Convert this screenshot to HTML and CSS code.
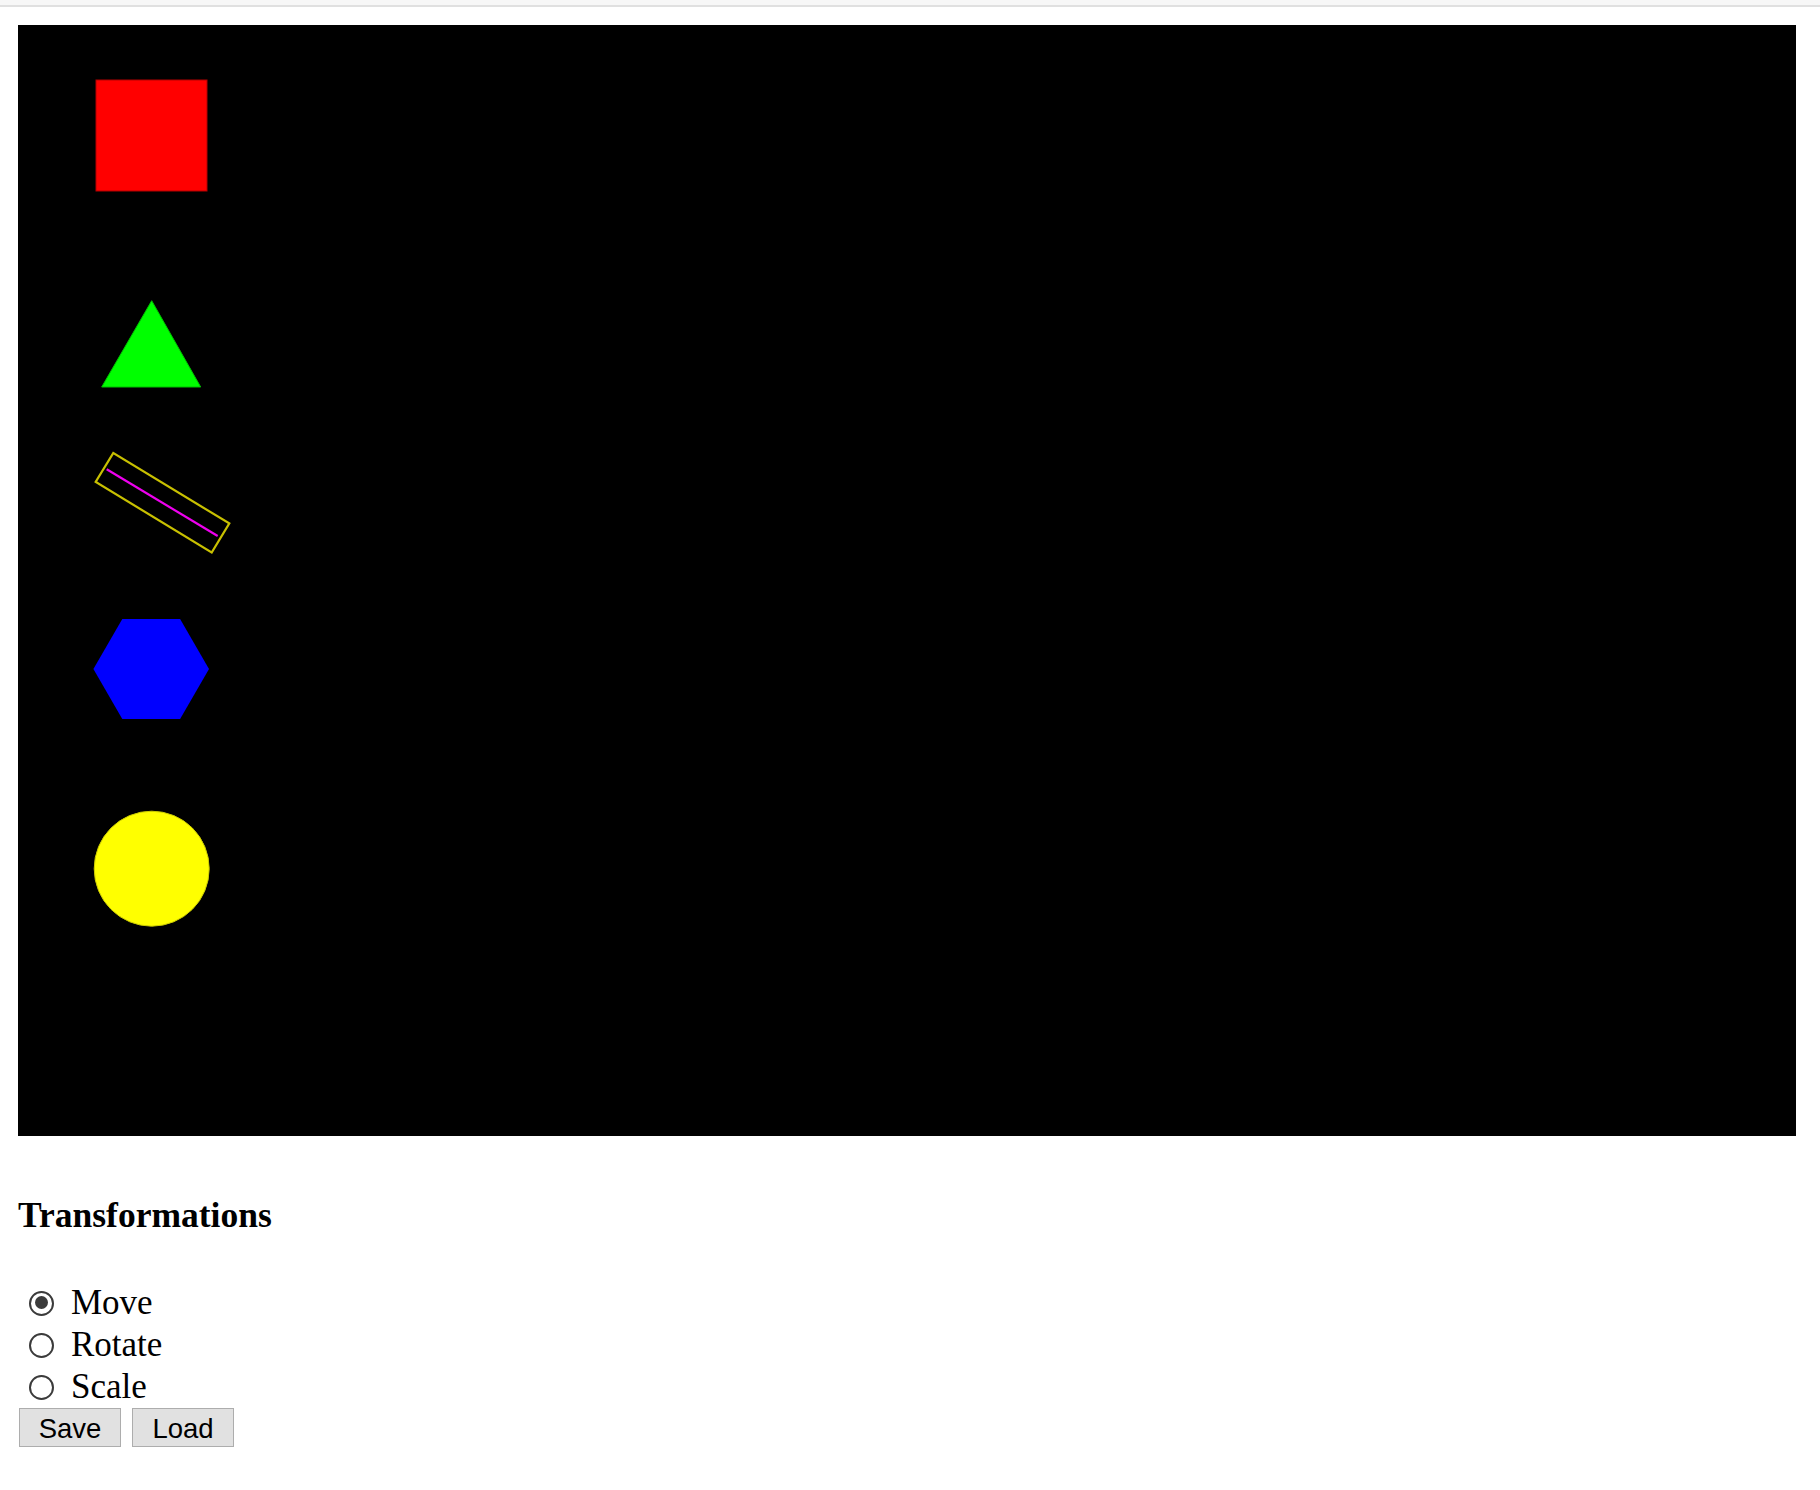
FILE: index.html
```html
<!DOCTYPE html>
<html>
<head>
<meta charset="utf-8">
<title>Transformations</title>
<link rel="stylesheet" href="styles.css">
</head>
<body>
<div class="topbar"></div>
<main class="page">
  <svg class="stage" width="1778" height="1111" viewBox="0 0 1778 1111">
    <rect x="78" y="55" width="111" height="111" fill="#ff0000" stroke="#b30000" stroke-width="1"/>
    <polygon points="133.7,275.7 83.7,362 182.7,362" fill="#00ff00" stroke="#00c000" stroke-width="1"/>
    <g transform="translate(144.5 477.7) rotate(31.3)">
      <rect x="-67.9" y="-16.95" width="135.8" height="33.9" fill="none" stroke="#c8c000" stroke-width="2.2"/>
    </g>
    <line x1="88.7" y1="444.3" x2="199.7" y2="511" stroke="#ee00ee" stroke-width="2.2"/>
    <polygon points="191,644 162.1,594 104.3,594 75.4,644 104.3,694 162.1,694" fill="#0000ff"/>
    <circle cx="133.7" cy="843.7" r="57.5" fill="#ffff00" stroke="#cccc00" stroke-width="1"/>
  </svg>

  <h3 class="title">Transformations</h3>

  <div class="modes">
    <label class="mode"><input type="radio" name="mode" class="radio" checked><span>Move</span></label>
    <label class="mode"><input type="radio" name="mode" class="radio"><span>Rotate</span></label>
    <label class="mode"><input type="radio" name="mode" class="radio"><span>Scale</span></label>
  </div>

  <div class="actions">
    <button class="btn">Save</button>
    <button class="btn">Load</button>
  </div>
</main>
</body>
</html>
```

FILE: styles.css
```css
html, body {
  margin: 0;
  padding: 0;
  background: #ffffff;
}

body {
  font-family: "Liberation Serif", "Times New Roman", serif;
  color: #000;
}

.topbar {
  height: 5px;
  background: #f7f7f7;
  border-bottom: 2px solid #e0e0e0;
}

.page {
  padding: 18px 0 0 18px;
}

.stage {
  display: block;
  background: #000000;
}

.title {
  margin: 59px 0 0 0;
  font-size: 35.5px;
  line-height: 40px;
  font-weight: bold;
}

.modes {
  margin-top: 47px;
  display: flex;
  flex-direction: column;
}

.mode {
  display: flex;
  align-items: center;
  height: 42px;
  font-size: 35px;
  line-height: 42px;
}

.radio {
  appearance: none;
  -webkit-appearance: none;
  box-sizing: border-box;
  width: 25px;
  height: 25px;
  margin: 0 17px 0 11px;
  border: 2.5px solid #3b3b3b;
  border-radius: 50%;
  background: #fff;
  position: relative;
  flex: none;
}

.radio:checked::after {
  content: "";
  position: absolute;
  left: 3.5px;
  top: 3.5px;
  width: 13px;
  height: 13px;
  border-radius: 50%;
  background: #3b3b3b;
}

.actions {
  margin-top: 0;
  display: flex;
  gap: 11px;
  padding-left: 1px;
}

.btn {
  box-sizing: border-box;
  width: 102px;
  height: 39px;
  padding: 2px 0 0 0;
  margin: 0;
  background: #e1e1e1;
  border: 1px solid #adadad;
  border-radius: 0;
  font-family: "Liberation Sans", Arial, sans-serif;
  font-size: 27.5px;
  color: #000;
}
```
